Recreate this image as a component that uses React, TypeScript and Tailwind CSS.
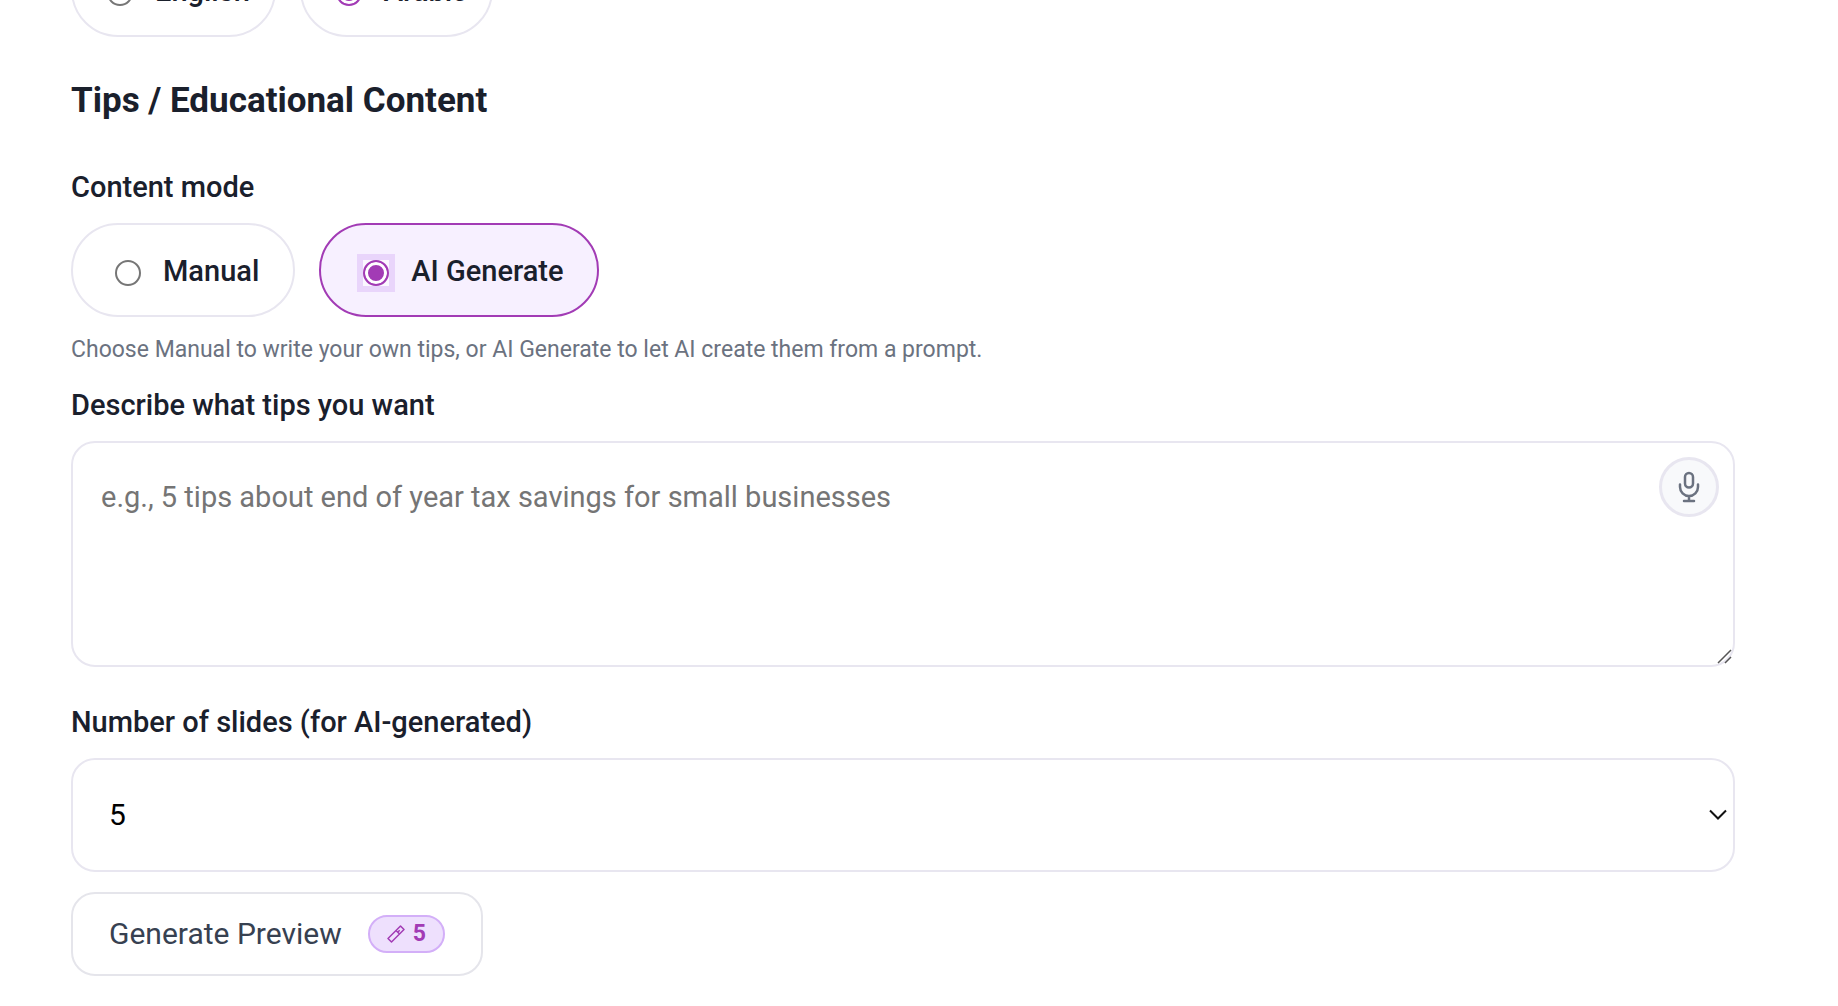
import { useState } from "react";
import type { ReactNode } from "react";
import clsx from "clsx";

type ChoiceProps = {
  name: string;
  label: string;
  checked: boolean;
  onChange: () => void;
  className?: string;
  autoFocus?: boolean;
};

function Choice({ name, label, checked, onChange, className, autoFocus }: ChoiceProps) {
  return (
    <label
      className={clsx(
        "flex h-[94px] cursor-pointer items-center gap-[22px] rounded-full border-2 pt-0.5 text-[29px] leading-10 font-medium",
        className,
      )}
    >
      {/* square focus halo around the round control */}
      <span className="mt-1 ml-2 size-[26px] shrink-0 has-[:focus]:bg-[#fbf8ff] has-[:focus]:shadow-[0_0_0_6px_#e9d5fb]">
        <input
          type="radio"
          name={name}
          checked={checked}
          onChange={onChange}
          autoFocus={autoFocus}
          className={clsx(
            "block size-[26px] appearance-none rounded-full border-2 border-[#767676] bg-white outline-none",
            "checked:border-[#a23bb5] checked:bg-[#a23bb5] checked:shadow-[inset_0_0_0_3px_white]",
          )}
        />
      </span>
      {label}
    </label>
  );
}

function FieldLabel({ htmlFor, children }: { htmlFor: string; children: ReactNode }) {
  return (
    <label htmlFor={htmlFor} className="mb-4 block w-fit text-[29px] leading-10 font-medium">
      {children}
    </label>
  );
}

export default function App() {
  const [language, setLanguage] = useState("Arabic");
  const [mode, setMode] = useState("AI Generate");
  const [slides, setSlides] = useState("5");

  return (
    <main className="min-h-screen overflow-hidden bg-white pr-[103px] pb-[30px] pl-[71px] font-[Roboto,sans-serif] text-[#1a202c]">
      <div className="-mt-[57px] flex gap-6">
        {["English", "Arabic"].map((l) => (
          <Choice
            key={l}
            name="language"
            label={l}
            checked={language === l}
            onChange={() => setLanguage(l)}
            className="border-[#e8e6f0] pr-6 pl-[26px]"
          />
        ))}
      </div>

      <h2 className="mt-10 mb-[42px] text-[35px] leading-12 font-bold">Tips / Educational Content</h2>

      <fieldset>
        <legend className="mb-4 text-[29px] leading-10 font-medium">Content mode</legend>
        <div className="flex gap-6">
          {["Manual", "AI Generate"].map((m) => (
            <Choice
              key={m}
              name="mode"
              label={m}
              checked={mode === m}
              onChange={() => setMode(m)}
              autoFocus={m === "AI Generate"}
              className={clsx("px-[34px]", mode === m ? "border-[#a23bb5] bg-[#f7f0ff]" : "border-[#e8e6f0]")}
            />
          ))}
        </div>
      </fieldset>
      <p className="mt-[17px] mb-[19px] text-[23px] leading-8 text-[#6b7280]">
        Choose Manual to write your own tips, or AI Generate to let AI create them from a prompt.
      </p>

      <FieldLabel htmlFor="prompt">Describe what tips you want</FieldLabel>
      <div className="relative">
        <textarea
          id="prompt"
          placeholder="e.g., 5 tips about end of year tax savings for small businesses"
          className="block h-[226px] w-full resize-none rounded-3xl border-2 border-[#e8e6f0] px-7 py-[34px] text-[29px] leading-10 outline-none placeholder:text-[#757575]"
        />
        <button
          type="button"
          aria-label="Dictate"
          className="absolute top-4 right-4 grid size-[60px] place-items-center rounded-full border-3 border-[#e8e6f0] bg-[#f8f9fb] text-[#6b7280]"
        >
          <svg viewBox="0 0 32 32" className="size-8" fill="none" stroke="currentColor" strokeWidth="2.500" strokeLinecap="round">
            <rect x="12" y="2" width="8" height="14.500" rx="4" />
            <path d="M7 13.500v2.500a9 9 0 0 0 18 0v-2.500M16 25v5M11 30h10" />
          </svg>
        </button>
        <svg viewBox="0 0 16 16" className="pointer-events-none absolute right-[3px] bottom-[3px] size-4" stroke="#555" strokeWidth="1.500">
          <path d="M2 15L15 2M9 15l6-6" />
        </svg>
      </div>

      <div className="mt-[35px]">
        <FieldLabel htmlFor="slides">Number of slides (for AI-generated)</FieldLabel>
        <div className="relative">
          <select
            id="slides"
            value={slides}
            onChange={(e) => setSlides(e.target.value)}
            className="block h-[114px] w-full appearance-none rounded-3xl border-2 border-[#e8e6f0] bg-white px-9 text-[30px] leading-10 text-black outline-none"
          >
            {["3", "4", "5", "6", "7"].map((n) => (
              <option key={n}>{n}</option>
            ))}
          </select>
          <svg viewBox="0 0 18 12" className="pointer-events-none absolute top-[51px] right-2 h-3 w-[18px]" fill="none" stroke="#111" strokeWidth="2">
            <path d="M1 1.500l8 8 8-8" />
          </svg>
        </div>
      </div>

      <button
        type="button"
        className="mt-5 flex h-[84px] items-center gap-[26px] rounded-3xl border-2 border-[#e5e5eb] bg-white px-9 text-[30px] leading-10 text-[#374151]"
      >
        Generate Preview
        <span className="flex h-[38px] items-center gap-2 rounded-full border-2 border-[#d3aff8] bg-[#eee0fd] px-[17px] text-[23px] leading-8 font-bold text-[#a23bb5]">
          <svg viewBox="0 0 18 18" className="size-[18px]" fill="none" stroke="currentColor" strokeWidth="1.500" strokeLinejoin="round">
            <path d="M13.500 1l3.500 3.500L4.500 17 1 13.500zM9 5.500L12.500 9M10.700 7.300l2-2" />
          </svg>
          {slides}
        </span>
      </button>
    </main>
  );
}
